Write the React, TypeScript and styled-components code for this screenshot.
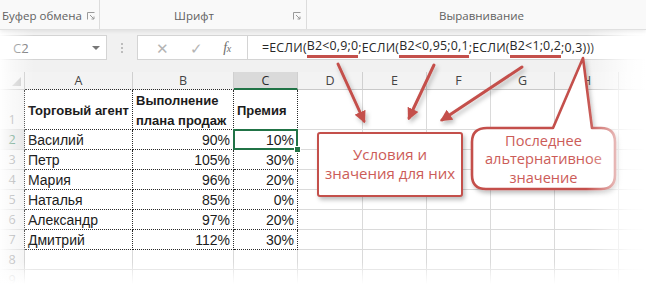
import React from "react";
import styled, { createGlobalStyle, css } from "styled-components";

const UI_FONT = `"Open Sans", "Noto Sans", "Liberation Sans", sans-serif`;
const CELL_FONT = `"Liberation Sans", Arial, sans-serif`;
const RED = "#c4504b";
const GREEN = "#217346";
const GRID = "#dadada";
const ANTS = "1px dotted #2a2a2a";

const GlobalStyle = createGlobalStyle`
  html, body {
    margin: 0;
    padding: 0;
    background: #fff;
  }
  body {
    width: 646px;
    height: 284px;
    overflow: hidden;
  }
`;

const Page = styled.div`
  position: relative;
  width: 646px;
  height: 284px;
  overflow: hidden;
  background: #fff;
  font-family: ${UI_FONT};
`;

// ---------- ribbon ----------
const Ribbon = styled.div`
  display: flex;
  height: 29px;
  background: #f9f9f9;
  border-bottom: 1px solid #e0e0e0;
  box-shadow: 0 2px 3px rgba(0, 0, 0, 0.06);
  position: relative;
  z-index: 1;
`;

const Group = styled.div<{ $w: number }>`
  flex: none;
  width: ${(p) => p.$w}px;
  display: flex;
  align-items: center;
  box-sizing: border-box;
  border-right: 1px solid #dcdcdc;
  font-size: 11.5px;
  color: #616161;
  white-space: nowrap;
`;

const GroupLabel = styled.div<{ $align?: string }>`
  flex: 1;
  text-align: ${(p) => p.$align ?? "center"};
  padding-top: 2px;
`;

const Launcher = styled.div`
  flex: none;
  width: 18px;
  display: flex;
  justify-content: center;
  padding-top: 3px;
`;

const LauncherIcon = () => (
  <svg width="8" height="8" viewBox="0 0 8 8">
    <path d="M0.5 7.5V0.5H7.5" fill="none" stroke="#9a9a9a" strokeWidth="1" />
    <path d="M3 3L7 7M7 4.5V7H4.5" fill="none" stroke="#9a9a9a" strokeWidth="1" />
  </svg>
);

// ---------- formula bar ----------
const FormulaBar = styled.div`
  display: flex;
  align-items: flex-start;
  height: 42px;
  box-sizing: border-box;
  padding-top: 5px;
  background: #f1f1f1;
`;

const Box = styled.div`
  height: 25px;
  box-sizing: border-box;
  background: #fff;
  border: 1px solid #d4d4d4;
  display: flex;
  align-items: center;
`;

const NameBox = styled(Box)`
  width: 109px;
  margin-left: -2px;
  padding: 0 6px 0 14px;
  font-size: 13px;
  color: #6a6a6a;
  justify-content: space-between;
`;

const DropArrow = styled.span`
  width: 0;
  height: 0;
  border-left: 4px solid transparent;
  border-right: 4px solid transparent;
  border-top: 4px solid #777;
`;

const Grip = styled.div`
  width: 30px;
  height: 25px;
  display: flex;
  flex-direction: column;
  align-items: center;
  justify-content: center;
  gap: 2px;
  span {
    width: 2px;
    height: 2px;
    background: #bdbdbd;
  }
`;

const ButtonsBox = styled(Box)`
  width: 111px;
  justify-content: space-around;
  padding: 0 6px 0 8px;
  color: #b4b4b4;
  font-size: 15px;
`;

const FxLabel = styled.span`
  font-family: "Liberation Serif", serif;
  font-style: italic;
  font-size: 14px;
  color: #6d6d6d;
  letter-spacing: -0.5px;
  span {
    font-size: 10px;
  }
`;

const FormulaInput = styled(Box)`
  flex: 1;
  margin-left: -1px;
  padding-left: 14px;
  font-size: 12.4px;
  letter-spacing: 0.2px;
  color: #262626;
  white-space: nowrap;
`;

const Mark = styled.span`
  border-bottom: 3px solid ${RED};
  padding-bottom: 1px;
`;

// ---------- sheet ----------
const COLS = [25, 108, 101, 64, 65, 64, 64, 64, 64, 64];
const LETTERS = ["A", "B", "C", "D", "E", "F", "G", "H", ""];

const Sheet = styled.div`
  display: grid;
  grid-template-columns: ${COLS.map((c) => c + "px").join(" ")};
  grid-template-rows: 18px 40px repeat(8, 20px);
  font-family: ${CELL_FONT};
`;

const Corner = styled.div`
  background: #f3f3f3;
  border-right: 1px solid #c9c9c9;
  border-bottom: 1px solid #c9c9c9;
  box-sizing: border-box;
  display: flex;
  align-items: flex-end;
  justify-content: flex-end;
  padding: 0 3px 3px 0;
  &::after {
    content: "";
    width: 0;
    height: 0;
    border-left: 9px solid transparent;
    border-bottom: 9px solid #c4c4c4;
  }
`;

const ColHead = styled.div<{ $active?: boolean; $ants?: boolean }>`
  box-sizing: border-box;
  background: #f3f3f3;
  border-right: 1px solid #d0d0d0;
  border-bottom: 1px solid #c9c9c9;
  display: flex;
  align-items: center;
  justify-content: center;
  font-family: ${UI_FONT};
  font-size: 12.5px;
  color: #444;
  ${(p) =>
    p.$ants &&
    css`
      border-bottom: ${ANTS};
    `}
  ${(p) =>
    p.$active &&
    css`
      background: #dadada;
      border-bottom: 2px solid ${GREEN};
      color: #2b2b2b;
    `}
`;

const RowHead = styled.div<{ $active?: boolean; $ants?: boolean }>`
  box-sizing: border-box;
  background: #f3f3f3;
  border-right: 1px solid #c9c9c9;
  border-bottom: 1px solid #d4d4d4;
  display: flex;
  align-items: flex-end;
  justify-content: center;
  padding-bottom: 1px;
  font-family: ${UI_FONT};
  font-size: 12.5px;
  color: #8a8a8a;
  ${(p) =>
    p.$ants &&
    css`
      border-right: ${ANTS};
    `}
  ${(p) =>
    p.$active &&
    css`
      background: #e1e1e1;
      color: ${GREEN};
    `}
`;

const Cell = styled.div<{
  $ants?: boolean;
  $bold?: boolean;
  $num?: boolean;
  $selected?: boolean;
}>`
  position: relative;
  box-sizing: border-box;
  border-right: 1px solid ${GRID};
  border-bottom: 1px solid ${GRID};
  display: flex;
  align-items: center;
  justify-content: ${(p) => (p.$num ? "flex-end" : "flex-start")};
  padding: 0 3px;
  font-size: 14px;
  font-weight: ${(p) => (p.$bold ? 700 : 400)};
  color: #1b1b1b;
  white-space: nowrap;
  line-height: 20px;
  ${(p) =>
    p.$bold &&
    css`
      font-size: 13px;
      white-space: normal;
      padding-top: 3px;
    `}
  ${(p) =>
    p.$ants &&
    css`
      border-right: ${ANTS};
      border-bottom: ${ANTS};
    `}
  ${(p) =>
    p.$selected &&
    css`
      &::after {
        content: "";
        position: absolute;
        left: -1px;
        top: -1px;
        right: -1px;
        bottom: -1px;
        border: 2px solid ${GREEN};
      }
      &::before {
        content: "";
        position: absolute;
        right: -4px;
        bottom: -4px;
        width: 5px;
        height: 5px;
        background: ${GREEN};
        border: 1px solid #fff;
        z-index: 1;
      }
    `}
`;

const TABLE: string[][] = [
  ["Торговый агент", "Выполнение плана продаж", "Премия"],
  ["Василий", "90%", "10%"],
  ["Петр", "105%", "30%"],
  ["Мария", "96%", "20%"],
  ["Наталья", "85%", "0%"],
  ["Александр", "97%", "20%"],
  ["Дмитрий", "112%", "30%"],
];

// ---------- annotations (lie over the sheet) ----------
const Overlay = styled.div`
  position: absolute;
  inset: 0;
  pointer-events: none;
`;

const Fade = styled.div<{ $side: "left" | "right" | "bottom" }>`
  position: absolute;
  pointer-events: none;
  ${(p) =>
    p.$side === "left" &&
    css`
      left: 0;
      top: 0;
      bottom: 0;
      width: 34px;
      background: linear-gradient(to right, rgba(255, 255, 255, 0.95), rgba(255, 255, 255, 0.55) 12px, rgba(255, 255, 255, 0));
    `}
  ${(p) =>
    p.$side === "right" &&
    css`
      right: 0;
      top: 0;
      bottom: 0;
      width: 60px;
      background: linear-gradient(to left, #fff 0, rgba(255, 255, 255, 0.85) 18px, rgba(255, 255, 255, 0));
    `}
  ${(p) =>
    p.$side === "bottom" &&
    css`
      left: 0;
      right: 0;
      bottom: 0;
      height: 22px;
      background: linear-gradient(to top, #fff 0, rgba(255, 255, 255, 0.6) 10px, rgba(255, 255, 255, 0));
    `}
`;

const CalloutText = styled.div`
  position: absolute;
  display: flex;
  flex-direction: column;
  align-items: center;
  justify-content: center;
  box-sizing: border-box;
  font-family: ${UI_FONT};
  font-size: 15px;
  line-height: 19px;
  color: #cc5c58;
  text-align: center;
  white-space: nowrap;
`;

const BoxCallout = styled(CalloutText)`
  left: 317px;
  top: 132px;
  width: 146px;
  height: 65px;
  background: #fff;
  border: 2.5px solid ${RED};
  border-radius: 3px;
  box-shadow: 2px 3px 4px rgba(0, 0, 0, 0.25);
  padding-bottom: 2px;
`;

const BubbleText = styled(CalloutText)`
  left: 472px;
  top: 127px;
  width: 143px;
  height: 63px;
  font-size: 14.6px;
  line-height: 18.5px;
`;

const Arrows = () => (
  <svg width="646" height="284" style={{ position: "absolute", left: 0, top: 0 }}>
    <defs>
      <marker id="head" markerWidth="4" markerHeight="4" refX="3.2" refY="2" orient="auto" markerUnits="strokeWidth">
        <path d="M0 0L4 2L0 4Z" fill={RED} />
      </marker>
      <filter id="sh" x="-10%" y="-10%" width="130%" height="140%">
        <feDropShadow dx="2" dy="3" stdDeviation="2" floodColor="#000" floodOpacity="0.25" />
      </filter>
    </defs>
    <g stroke={RED} strokeWidth="3" strokeLinecap="round" fill="none" filter="url(#sh)">
      <path d="M338 64L364 121" markerEnd="url(#head)" />
      <path d="M434 65L409 118" markerEnd="url(#head)" />
      <path d="M522 67L442 120" markerEnd="url(#head)" />
    </g>
    <path
      d="M487 128H553L583 58L592 128H601Q615 128 615 142V175Q615 189 601 189H486Q472 189 472 175V142Q472 128 487 128Z"
      fill="#fff"
      stroke={RED}
      strokeWidth="2.6"
      strokeLinejoin="round"
      filter="url(#sh)"
    />
  </svg>
);

export default function App() {
  return (
    <Page>
      <GlobalStyle />
      <Ribbon>
        <Group $w={100}>
          <GroupLabel $align="left" style={{ paddingLeft: 2 }}>
            Буфер обмена
          </GroupLabel>
          <Launcher>
            <LauncherIcon />
          </Launcher>
        </Group>
        <Group $w={207}>
          <GroupLabel>Шрифт</GroupLabel>
          <Launcher>
            <LauncherIcon />
          </Launcher>
        </Group>
        <Group $w={350}>
          <GroupLabel>Выравнивание</GroupLabel>
        </Group>
      </Ribbon>

      <FormulaBar>
        <NameBox>
          <span>C2</span>
          <DropArrow />
        </NameBox>
        <Grip>
          <span />
          <span />
          <span />
        </Grip>
        <ButtonsBox>
          <span>✕</span>
          <span>✓</span>
          <FxLabel>
            f<span>x</span>
          </FxLabel>
        </ButtonsBox>
        <FormulaInput>
          =ЕСЛИ(<Mark>B2&lt;0,9;0</Mark>;ЕСЛИ(<Mark>B2&lt;0,95;0,1</Mark>;ЕСЛИ(
          <Mark>B2&lt;1;0,2</Mark>;0,3)))
        </FormulaInput>
      </FormulaBar>

      <Sheet>
        <Corner />
        {LETTERS.map((l, i) => (
          <ColHead key={i} $active={i === 2} $ants={i < 2}>
            {l}
          </ColHead>
        ))}
        {Array.from({ length: 9 }, (_, r) => (
          <React.Fragment key={r}>
            <RowHead $active={r === 1} $ants={r < 7}>
              {r + 1}
            </RowHead>
            {LETTERS.map((_l, c) => {
              const text = r < 7 && c < 3 ? TABLE[r][c] : "";
              return (
                <Cell
                  key={c}
                  $ants={r < 7 && c < 3}
                  $bold={r === 0 && c < 3}
                  $num={r > 0 && (c === 1 || c === 2)}
                  $selected={r === 1 && c === 2}
                >
                  {text}
                </Cell>
              );
            })}
          </React.Fragment>
        ))}
      </Sheet>

      <Overlay>
        <Arrows />
        <BoxCallout>
          <span>Условия и</span>
          <span>значения для них</span>
        </BoxCallout>
        <BubbleText>
          <span>Последнее</span>
          <span>альтернативное</span>
          <span>значение</span>
        </BubbleText>
        <Fade $side="left" />
        <Fade $side="right" />
        <Fade $side="bottom" />
      </Overlay>
    </Page>
  );
}
